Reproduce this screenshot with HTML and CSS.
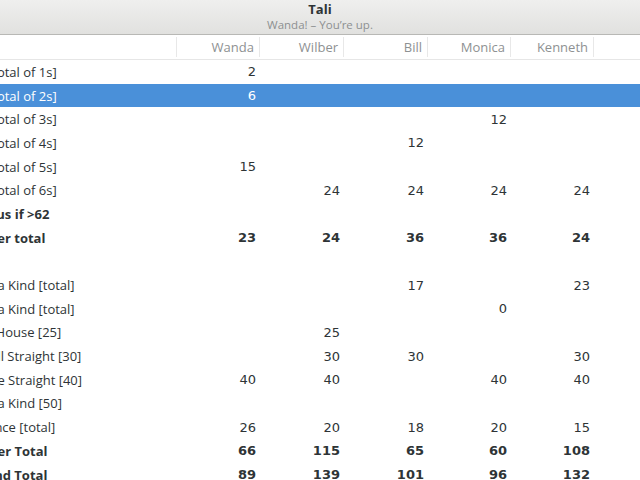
FILE: index.html
```html
<!DOCTYPE html>
<html lang="en">
<head>
    <meta charset="UTF-8">
    <title>Tali</title>
    <link rel="stylesheet" href="styles.css">
</head>
<body>
    <div class="headerbar">
        <div class="title">Tali</div>
        <div class="subtitle">Wanda! – You’re up.</div>
    </div>
    <div class="view">
        <div class="scores">
            <div class="row head">
                <div class="cell label"></div>
                <div class="cell">Wanda</div>
                <div class="cell">Wilber</div>
                <div class="cell">Bill</div>
                <div class="cell">Monica</div>
                <div class="cell">Kenneth</div>
                <div class="cell last"></div>
            </div>
            <div class="row">
                <div class="cell label">1s [total of 1s]</div>
                <div class="cell">2</div><div class="cell"></div><div class="cell"></div><div class="cell"></div><div class="cell"></div><div class="cell"></div>
            </div>
            <div class="row selected">
                <div class="cell label">2s [total of 2s]</div>
                <div class="cell">6</div><div class="cell"></div><div class="cell"></div><div class="cell"></div><div class="cell"></div><div class="cell"></div>
            </div>
            <div class="row">
                <div class="cell label">3s [total of 3s]</div>
                <div class="cell"></div><div class="cell"></div><div class="cell"></div><div class="cell">12</div><div class="cell"></div><div class="cell"></div>
            </div>
            <div class="row">
                <div class="cell label">4s [total of 4s]</div>
                <div class="cell"></div><div class="cell"></div><div class="cell">12</div><div class="cell"></div><div class="cell"></div><div class="cell"></div>
            </div>
            <div class="row">
                <div class="cell label">5s [total of 5s]</div>
                <div class="cell">15</div><div class="cell"></div><div class="cell"></div><div class="cell"></div><div class="cell"></div><div class="cell"></div>
            </div>
            <div class="row">
                <div class="cell label">6s [total of 6s]</div>
                <div class="cell"></div><div class="cell">24</div><div class="cell">24</div><div class="cell">24</div><div class="cell">24</div><div class="cell"></div>
            </div>
            <div class="row bold">
                <div class="cell label">Bonus if &gt;62</div>
                <div class="cell"></div><div class="cell"></div><div class="cell"></div><div class="cell"></div><div class="cell"></div><div class="cell"></div>
            </div>
            <div class="row bold">
                <div class="cell label">Upper total</div>
                <div class="cell">23</div><div class="cell">24</div><div class="cell">36</div><div class="cell">36</div><div class="cell">24</div><div class="cell"></div>
            </div>
            <div class="row">
                <div class="cell label"></div>
                <div class="cell"></div><div class="cell"></div><div class="cell"></div><div class="cell"></div><div class="cell"></div><div class="cell"></div>
            </div>
            <div class="row">
                <div class="cell label">3 of a Kind [total]</div>
                <div class="cell"></div><div class="cell"></div><div class="cell">17</div><div class="cell"></div><div class="cell">23</div><div class="cell"></div>
            </div>
            <div class="row">
                <div class="cell label">4 of a Kind [total]</div>
                <div class="cell"></div><div class="cell"></div><div class="cell"></div><div class="cell zero">0</div><div class="cell"></div><div class="cell"></div>
            </div>
            <div class="row">
                <div class="cell label">Full House [25]</div>
                <div class="cell"></div><div class="cell">25</div><div class="cell"></div><div class="cell"></div><div class="cell"></div><div class="cell"></div>
            </div>
            <div class="row">
                <div class="cell label">Small Straight [30]</div>
                <div class="cell"></div><div class="cell">30</div><div class="cell">30</div><div class="cell"></div><div class="cell">30</div><div class="cell"></div>
            </div>
            <div class="row">
                <div class="cell label">Large Straight [40]</div>
                <div class="cell">40</div><div class="cell">40</div><div class="cell"></div><div class="cell">40</div><div class="cell">40</div><div class="cell"></div>
            </div>
            <div class="row">
                <div class="cell label">5 of a Kind [50]</div>
                <div class="cell"></div><div class="cell"></div><div class="cell"></div><div class="cell"></div><div class="cell"></div><div class="cell"></div>
            </div>
            <div class="row">
                <div class="cell label">Chance [total]</div>
                <div class="cell">26</div><div class="cell">20</div><div class="cell">18</div><div class="cell">20</div><div class="cell">15</div><div class="cell"></div>
            </div>
            <div class="row bold">
                <div class="cell label">Lower Total</div>
                <div class="cell">66</div><div class="cell">115</div><div class="cell">65</div><div class="cell">60</div><div class="cell">108</div><div class="cell"></div>
            </div>
            <div class="row bold">
                <div class="cell label">Grand Total</div>
                <div class="cell">89</div><div class="cell">139</div><div class="cell">101</div><div class="cell">96</div><div class="cell">132</div><div class="cell"></div>
            </div>
        </div>
    </div>
</body>
</html>
```

FILE: styles.css
```css
html, body{
    margin: 0;
    padding: 0;
    width: 640px;
    height: 480px;
    overflow: hidden;
    background-color: white;
    font-family: "Open Sans", "Noto Sans", sans-serif;
    color: #2e3436;
}

.headerbar{
    height: 35px;
    box-sizing: border-box;
    padding-bottom: 2px;
    border-bottom: 1px solid #b8b8b5;
    background: linear-gradient(#efefee, #e1e1df);
    display: flex;
    flex-direction: column;
    align-items: center;
    justify-content: center;
}

.title{
    font-size: 13px;
    font-weight: bold;
    line-height: 16px;
    color: #2e3436;
}

.subtitle{
    font-size: 11.5px;
    line-height: 15px;
    color: #8d9091;
}

.view{
    overflow: hidden;
}

.scores{
    margin-left: -29px;
}

.row{
    display: grid;
    grid-template-columns: 206px 83px 84px 84px 83px 83px 1fr;
    height: 23.7px;
    align-items: center;
}

.cell{
    text-align: right;
    padding-right: 4px;
    font-family: "DejaVu Sans", sans-serif;
    font-size: 13px;
    white-space: nowrap;
    overflow: hidden;
}

.cell.label{
    text-align: left;
    padding-right: 0;
    font-family: "Open Sans", "Noto Sans", sans-serif;
    font-size: 13px;
}

.row.head{
    height: 25px;
    box-sizing: border-box;
    border-bottom: 1px solid #e6e6e6;
}

.row.head .cell{
    height: 20px;
    line-height: 20px;
    padding-right: 5px;
    border-right: 1px solid #e8e8e8;
    font-family: "Open Sans", "Noto Sans", sans-serif;
    color: #8e9192;
}

.row.head .cell.last{
    border-right: none;
}

.row.bold .cell{
    font-weight: bold;
}

.row.selected{
    background-color: #4a90d9;
    color: white;
}
```
